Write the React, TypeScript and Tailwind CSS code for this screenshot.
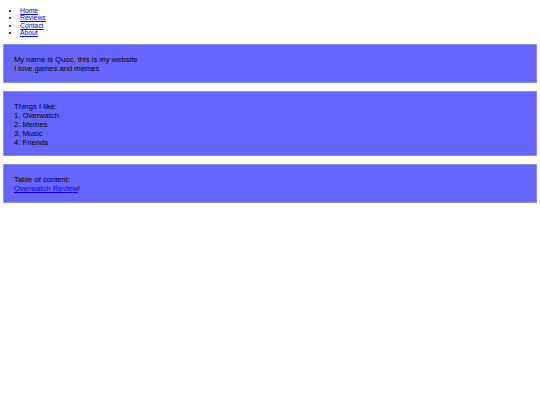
export default function App() {
    const links = ["Home", "Reviews", "Contact", "About"];
    const likes = ["Overwatch", "Memes", "Music", "Friends"];

    return (
        <div className="min-h-[405px] bg-white px-[3px] pt-[6.5px] text-black" style={{ fontFamily: '"Liberation Sans", Arial, sans-serif' }}>
            <ul className="mb-[6.8px] list-disc pl-[17px] text-[6.8px] leading-[7.6px]">
                {links.map((l) => (
                    <li key={l}>
                        <a href="#" className="text-[#0000ee] underline">{l}</a>
                    </li>
                ))}
            </ul>

            <div className="flex flex-col gap-[8px] text-[7.65px] leading-[9px]">
                <div className="border border-[#8c8cf2] bg-[#6666ff] px-[10px] pt-[10px] pb-[9px]">
                    <p>My name is Quoc, this is my website</p>
                    <p>I love games and memes</p>
                </div>

                <div className="border border-[#8c8cf2] bg-[#6666ff] px-[10px] pt-[10px] pb-[8.5px]">
                    <p>Things I like:</p>
                    {likes.map((x, i) => (
                        <p key={x}>{i + 1}. {x}</p>
                    ))}
                </div>

                <div className="border border-[#8c8cf2] bg-[#6666ff] px-[10px] pt-[10px] pb-[9px]">
                    <p>Table of content:</p>
                    <p>
                        <a href="#" className="text-[#0000ee] underline">Overwatch Review</a>!
                    </p>
                </div>
            </div>
        </div>
    );
}
